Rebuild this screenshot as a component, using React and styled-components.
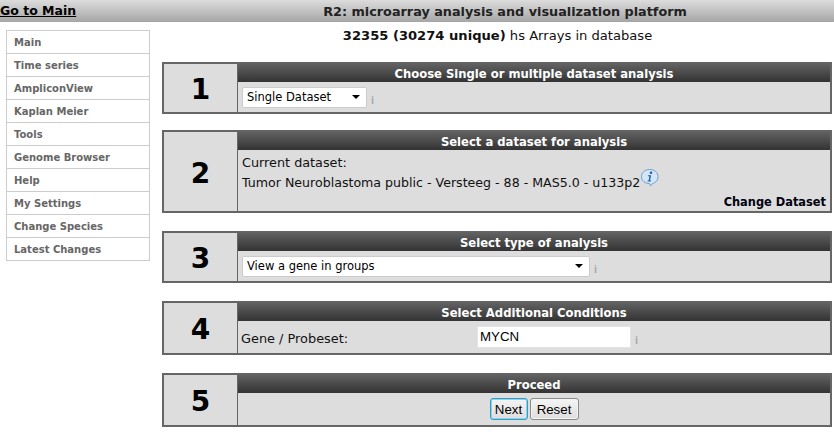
import React from "react";
import styled, { createGlobalStyle } from "styled-components";

const Global = createGlobalStyle`
  html, body { margin: 0; padding: 0; background: #fff; overflow: hidden; }
  body { font-family: "DejaVu Sans", Verdana, sans-serif; font-size: 12.6px; color: #111; }
`;
const Page = styled.div`width: 834px; height: 445px; overflow: hidden;`;
const TopBar = styled.header`
  display: grid; grid-template-columns: 162px 1fr; height: 22px; align-items: center;
  background: linear-gradient(#dcdcdc, #a6a6a6);
`;
const MainLink = styled.a`
  font-size: 12.5px; font-weight: bold; color: #000; text-decoration: underline; padding-bottom: 1px;
`;
const TopTitle = styled.div`
  font-size: 12.8px; font-weight: bold; color: #222; text-align: center; padding-left: 14px;
`;
const Columns = styled.div`display: grid; grid-template-columns: 162px 670px; align-items: start;`;
const Menu = styled.nav`
  margin: 8px 0 0 6px; width: 142px; border: 1px solid #ccc; display: flex; flex-direction: column;
`;
const MenuItem = styled.a`
  height: 22px; line-height: 23px; padding-left: 7px; font-size: 10px; font-weight: bold; color: #666;
  border-top: ${p => (p.$first ? "0" : "1px solid #ccc")};
`;
const Main = styled.main`display: flex; flex-direction: column;`;
const Stats = styled.div`
  height: 40px; line-height: 28px; text-align: center; font-size: 13.1px; color: #111; padding-left: 1px;
  b { font-weight: bold; }
`;
const Panel = styled.section`
  display: grid; grid-template-columns: 74px 1fr; height: ${p => p.$h}px;
  margin-bottom: ${p => p.$gap}px; box-sizing: border-box;
  background: #666; padding: 2px;
`;
const StepCell = styled.div`
  background: #ddd; display: flex; align-items: center; justify-content: center;
  font-size: 28px; font-weight: bold; color: #000; border-right: 1px solid #666; padding-top: 3px;
`;
const PanelBody = styled.div`display: flex; flex-direction: column; margin: -2px 0 0 0; min-width: 0;`;
const PanelHead = styled.h2`
  margin: 0; height: 20px; line-height: 24px; font-size: 11.6px; font-weight: bold; color: #fff; text-align: center;
  background: linear-gradient(#666, #333); flex: none;
`;
const Content = styled.div`
  flex: 1; background: #ddd; padding: 0 4px; display: flex; align-items: center; gap: 4px; position: relative;
  ${p => p.$center && "justify-content: center; gap: 2px;"}
`;
const Stack = styled(Content)`
  flex-direction: column; align-items: flex-start; gap: 0; padding-top: 3px; line-height: 20px;
`;
const DatasetTitle = styled.div`font-size: 12.8px;`;
const Select = styled.div`
  box-sizing: border-box; width: ${p => p.$w}px; height: 21px; background: #fff; border: 1px solid #ccc; border-radius: 2px;
  display: flex; align-items: center; justify-content: space-between; padding: 0 6px 0 4px; font-size: 11.5px; color: #000;
`;
const Arrow = styled.span`
  width: 0; height: 0; border-left: 4px solid transparent; border-right: 4px solid transparent; border-top: 4px solid #000;
`;
const Hint = styled.span`
  font-size: 11px; color: #aaa; margin-left: 0; padding-top: 6px; font-family: "Liberation Sans", sans-serif; font-weight: bold;
`;
const InfoIcon = styled.svg`
  width: 19px; height: 19px; margin-top: -5px; position: absolute;
`;
const DatasetLine = styled.div`position: relative; white-space: nowrap;`;
const ChangeLink = styled.a`
  position: absolute; right: 4px; bottom: 1px; font-size: 11.4px; font-weight: bold; color: #001;
  line-height: 16px;
`;
const GeneLabel = styled.span`width: 232px; flex: none; margin-left: -1px; padding-top: 2px; font-size: 12.9px;`;
const GeneInput = styled.div`
  box-sizing: border-box; width: 154px; height: 22px; background: #fff; border: 1px solid #e4e4e4;
  padding-left: 2px; color: #000; font: 13.3px/20px "Liberation Sans", sans-serif;
`;
const Button = styled.button`
  box-sizing: border-box; height: 22px; width: ${p => p.$w}px; padding: 0; font: 13.3px "Liberation Sans", sans-serif; color: #000;
  background: linear-gradient(#f4f4f4, #dedede); border-radius: 3px;
  border: ${p => (p.$active ? "1px solid #2f9ec9" : "1px solid #8a8a8a")};
  box-shadow: ${p => (p.$active ? "0 0 0 1px #8fd0ea inset" : "0 0 0 1px #f4f4f4 inset")};
`;

const menu = ["Main", "Time series", "AmpliconView", "Kaplan Meier", "Tools", "Genome Browser", "Help", "My Settings", "Change Species", "Latest Changes"];

export default function App() {
  return (
    <Page>
      <Global />
      <TopBar>
        <MainLink>Go to Main</MainLink>
        <TopTitle>R2: microarray analysis and visualization platform</TopTitle>
      </TopBar>
      <Columns>
        <Menu>
          {menu.map((m, i) => <MenuItem key={m} $first={i === 0}>{m}</MenuItem>)}
        </Menu>
        <Main>
          <Stats><b>32355 (30274 unique)</b> hs Arrays in database</Stats>
          <Panel $h={52} $gap={16}>
            <StepCell>1</StepCell>
            <PanelBody>
              <PanelHead>Choose Single or multiple dataset analysis</PanelHead>
              <Content>
                <Select $w={125}>Single Dataset<Arrow /></Select>
                <Hint>i</Hint>
              </Content>
            </PanelBody>
          </Panel>
          <Panel $h={83} $gap={18}>
            <StepCell>2</StepCell>
            <PanelBody>
              <PanelHead>Select a dataset for analysis</PanelHead>
              <Stack>
                <DatasetTitle>Current dataset:</DatasetTitle>
                <DatasetLine>
                  Tumor Neuroblastoma public - Versteeg - 88 - MAS5.0 - u133p2
                  <InfoIcon viewBox="0 0 19 19">
                    <path d="M9.5 1.5C14.5 1.5 18 4.6 18 8.8c0 3.4-2.2 6-5.6 6.8L10.5 18l-.9-2.4C4.8 15.5 1.5 12.6 1.5 8.8 1.5 4.6 4.8 1.5 9.5 1.5z" fill="#d5e6f7" stroke="#6f9fd0" strokeWidth="1" />
                    <circle cx="11" cy="4.8" r="1.3" fill="#1f5fb0" />
                    <path d="M8 7.2h3.2l-1.2 5.2h1.2l-.3 1H7.4l.3-1h.9l.9-4.2H7.8z" fill="#1f5fb0" />
                  </InfoIcon>
                </DatasetLine>
                <ChangeLink>Change Dataset</ChangeLink>
              </Stack>
            </PanelBody>
          </Panel>
          <Panel $h={52} $gap={18}>
            <StepCell>3</StepCell>
            <PanelBody>
              <PanelHead>Select type of analysis</PanelHead>
              <Content>
                <Select $w={348}>View a gene in groups<Arrow /></Select>
                <Hint>i</Hint>
              </Content>
            </PanelBody>
          </Panel>
          <Panel $h={54} $gap={18}>
            <StepCell>4</StepCell>
            <PanelBody>
              <PanelHead>Select Additional Conditions</PanelHead>
              <Content>
                <GeneLabel>Gene / Probeset:</GeneLabel>
                <GeneInput>MYCN</GeneInput>
                <Hint>i</Hint>
              </Content>
            </PanelBody>
          </Panel>
          <Panel $h={54} $gap={0}>
            <StepCell>5</StepCell>
            <PanelBody>
              <PanelHead>Proceed</PanelHead>
              <Content $center>
                <Button $active $w={38}>Next</Button>
                <Button $w={49}>Reset</Button>
              </Content>
            </PanelBody>
          </Panel>
        </Main>
      </Columns>
    </Page>
  );
}
